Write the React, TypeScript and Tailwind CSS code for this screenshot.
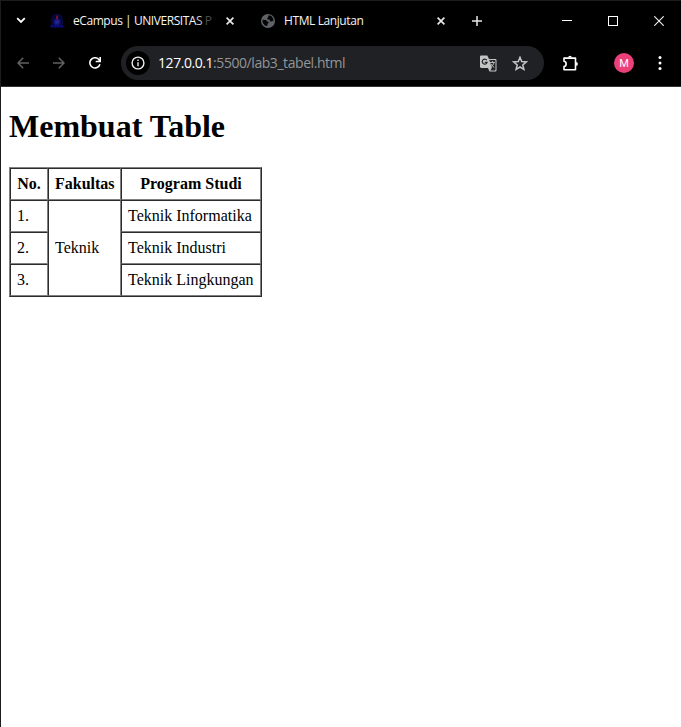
import React from "react";

function CloseIcon() {
  return (
    <svg width="8" height="8" viewBox="0 0 8 8" fill="none" stroke="#e8e8e8" strokeWidth="1.7">
      <path d="M.6.6l6.8 6.8M7.4.6L.6 7.4" />
    </svg>
  );
}

function CrestIcon() {
  return (
    <svg width="14" height="15" viewBox="0 0 14 15">
      <path d="M1 12C0 5 2 .5 7 .5S14 5 13 12v2.5H1z" fill="#060637" />
      <path d="M.5 12h13v2.5H.5z" fill="#0b0b6e" />
      <circle cx="7" cy="9" r="3.6" fill="#131378" />
      <circle cx="7" cy="9" r="2" fill="#25258f" />
      <path d="M6.5 2.5h1.3v3.4H6.2z" fill="#a01420" />
    </svg>
  );
}

function GlobeIcon() {
  return (
    <svg width="14" height="14" viewBox="0 0 14 14">
      <circle cx="7" cy="7" r="7" fill="#5f6368" />
      <path
        d="M1.6 5.8L4.6 6c1.2.1 1 1.4 2.2 1.5 1 .1 1.2 1.2.4 1.8-.8.5-.4 1.7-1.1 2.8C3 11.8 1.2 9.3 1.6 5.8zM7.2 1.6h2c2 .8 3.2 2.6 3.3 4.8-.8 1.1-1.5.3-2.3 1-.8.5-1.6-.1-1.3-1 .2-.8-.7-.9-1.7-.9-1 0-1.5-.9-.8-1.4.8-.6 1-.4.8-2.5z"
        fill="#050505"
      />
    </svg>
  );
}

function TranslateIcon() {
  return (
    <svg width="17" height="17" viewBox="0 0 17 17" fill="none">
      <path d="M1.3.5h6L9 4h6.2c.7 0 1.3.5 1.3 1.2v10c0 .7-.6 1.3-1.3 1.3H9.5L8 13H1.3C.6 13 0 12.5 0 11.8V1.7C0 1 .6.5 1.3.5z" fill="#c4c4c4" />
      <path d="M9.3 5h5.5c.4 0 .7.3.7.7v9c0 .4-.3.7-.7.7h-4.5l1.5-2.3z" fill="#242528" />
      <path d="M6.8 5.2A2.5 2.5 0 1 0 7.1 7.4H4.8" stroke="#242528" strokeWidth="1.2" />
      <path d="M9.9 7.4h4.9M12.4 6.2v1.2M14 7.5c-.5 2-1.7 3.4-3.5 4.6M10.9 8.8c.9 1.5 1.7 2.5 3.3 3.7" stroke="#c4c4c4" strokeWidth="1" />
    </svg>
  );
}

function Tab({ icon, title, className }: { icon: React.ReactNode; title: React.ReactNode; className: string }) {
  return (
    <div className={`flex h-full items-center ${className}`}>
      <div className="flex w-[23px] shrink-0 items-center">{icon}</div>
      <div className="min-w-0 flex-1 whitespace-nowrap text-[12px] leading-4 text-[#f4f4f4]">{title}</div>
      <div className="ml-2 shrink-0">
        <CloseIcon />
      </div>
    </div>
  );
}

function TabStrip() {
  return (
    <div className="flex h-[39px] items-center">
      <div className="flex w-[49px] items-center pl-[15px]">
        <svg width="10" height="7" viewBox="0 0 10 7" fill="none" stroke="#fff" strokeWidth="1.8">
          <path d="M1.2 1.2L5 5l3.8-3.8" />
        </svg>
      </div>
      <Tab
        className="w-[184px]"
        icon={<CrestIcon />}
        title={
          <span className="tracking-[-0.44px]">
            eCampus | UNIVERSITA<span className="text-[#c8c8c8]">S</span> <span className="text-[#4c4c4c]">P</span>
          </span>
        }
      />
      <Tab
        className="ml-[27px] w-[184px]"
        icon={<GlobeIcon />}
        title={<span className="tracking-[-0.4px]">HTML Lanjutan</span>}
      />
      <svg className="ml-[27px]" width="10" height="10" viewBox="0 0 10 10" stroke="#e8e8e8" strokeWidth="1.5">
        <path d="M5 0v10M0 5h10" />
      </svg>
      <div className="ml-auto flex items-center gap-9 pr-[17px]">
        <svg width="10" height="10" shapeRendering="crispEdges">
          <path d="M0 4h10v1H0z" fill="#fff" />
        </svg>
        <svg width="10" height="10" shapeRendering="crispEdges">
          <path d="M.5.5h9v9h-9z" fill="none" stroke="#fff" />
        </svg>
        <svg width="10" height="10" stroke="#f2f2f2" strokeWidth="1.1">
          <path d="M.3.3l9.4 9.4M9.7.3L.3 9.7" />
        </svg>
      </div>
    </div>
  );
}

function Toolbar() {
  return (
    <div className="flex h-[47px] items-center border-b border-[#333333]">
      <div className="flex w-[120px] items-center gap-6 pl-4">
        <svg width="12" height="12" viewBox="0 0 12 12" fill="none" stroke="#626262" strokeWidth="1.5">
          <path d="M12 6H1M6.2.7L1 6l5.2 5.3" />
        </svg>
        <svg width="12" height="12" viewBox="0 0 12 12" fill="none" stroke="#626262" strokeWidth="1.5">
          <path d="M0 6h11M5.8.7L11 6l-5.2 5.3" />
        </svg>
        <svg width="12" height="12" viewBox="0 0 12 12" fill="none" stroke="#fff" strokeWidth="1.6">
          <path d="M10.9 7.2A5.1 5.1 0 1 1 10.3 3.2L11 4.2M11.2 0v4.5H6.7" />
        </svg>
      </div>
      <div className="flex h-[34px] w-[423px] items-center rounded-full bg-[#202124] pl-[5px] pr-4">
        <div className="flex size-6 items-center justify-center rounded-full bg-black">
          <svg width="14" height="14" viewBox="0 0 14 14" fill="none" stroke="#eeeeee" strokeWidth="1.4">
            <circle cx="7" cy="7" r="5.9" />
            <path d="M7 6.2v4M7 3.5v1.4" />
          </svg>
        </div>
        <div className="ml-2 flex-1 whitespace-nowrap text-[14px] leading-5 tracking-[-0.44px] text-[#929599]">
          <span className="text-white">127.0.0.1</span>:5500/lab3_tabel.html
        </div>
        <TranslateIcon />
        <svg className="ml-[15px]" width="16" height="15" viewBox="0 0 16 15" fill="none" stroke="#c4c4c4" strokeWidth="1.5">
          <path d="M8 1.3l1.7 4.2 4.6.4-3.5 3 1.1 4.5L8 11l-3.9 2.4 1.1-4.5-3.5-3 4.6-.4z" />
        </svg>
      </div>
      <svg className="ml-[18px]" width="17" height="17" viewBox="0 0 17 17">
        <path d="M2 3.1h11.5v11.6H2v-3.2c2.9-.5 2.9-4.7 0-5.2z" fill="none" stroke="#fff" strokeWidth="1.6" strokeLinejoin="round" />
        <path d="M6.2 2.6a1.8 1.8 0 0 1 3.6 0zM14 7a1.9 1.9 0 0 1 0 3.8z" fill="#fff" />
      </svg>
      <div className="ml-[35px] flex size-5 items-center justify-center rounded-full bg-[#ec407a] font-[Roboto] text-[11px] leading-none text-white">
        M
      </div>
      <svg className="ml-6" width="4" height="14" viewBox="0 0 4 14" fill="#fff">
        <circle cx="2" cy="1.5" r="1.5" />
        <circle cx="2" cy="7" r="1.5" />
        <circle cx="2" cy="12.5" r="1.5" />
      </svg>
    </div>
  );
}

const cell = "h-8 border border-t-[#2c2c2c] border-l-[#2c2c2c] border-r-[#808080] border-b-[#808080] px-1.5 py-0";

export default function App() {
  return (
    <div className="h-[727px] w-[681px] overflow-hidden border-t border-l border-[#1c1c1c] bg-white">
      <header className="bg-black font-['Open_Sans','Noto_Sans',sans-serif]">
        <TabStrip />
        <Toolbar />
      </header>
      <main className="px-2 pt-[21px] font-['Liberation_Serif','Times_New_Roman',serif] text-[16px] leading-[18px] text-black">
        <h1 className="mb-[22px] text-[32px] leading-[37px] font-bold">Membuat Table</h1>
        <table className="w-[253px] table-fixed border-separate border-spacing-0 border border-t-[#808080] border-l-[#808080] border-r-[#2c2c2c] border-b-[#2c2c2c]">
          <colgroup>
            <col className="w-[38px]" />
            <col className="w-[73px]" />
            <col className="w-[140px]" />
          </colgroup>
          <thead>
            <tr>
              <th className={cell}>No.</th>
              <th className={cell}>Fakultas</th>
              <th className={cell}>Program Studi</th>
            </tr>
          </thead>
          <tbody>
            <tr>
              <td className={cell}>1.</td>
              <td className={cell} rowSpan={3}>Teknik</td>
              <td className={cell}>Teknik Informatika</td>
            </tr>
            <tr>
              <td className={cell}>2.</td>
              <td className={cell}>Teknik Industri</td>
            </tr>
            <tr>
              <td className={cell}>3.</td>
              <td className={cell}>Teknik Lingkungan</td>
            </tr>
          </tbody>
        </table>
      </main>
    </div>
  );
}
